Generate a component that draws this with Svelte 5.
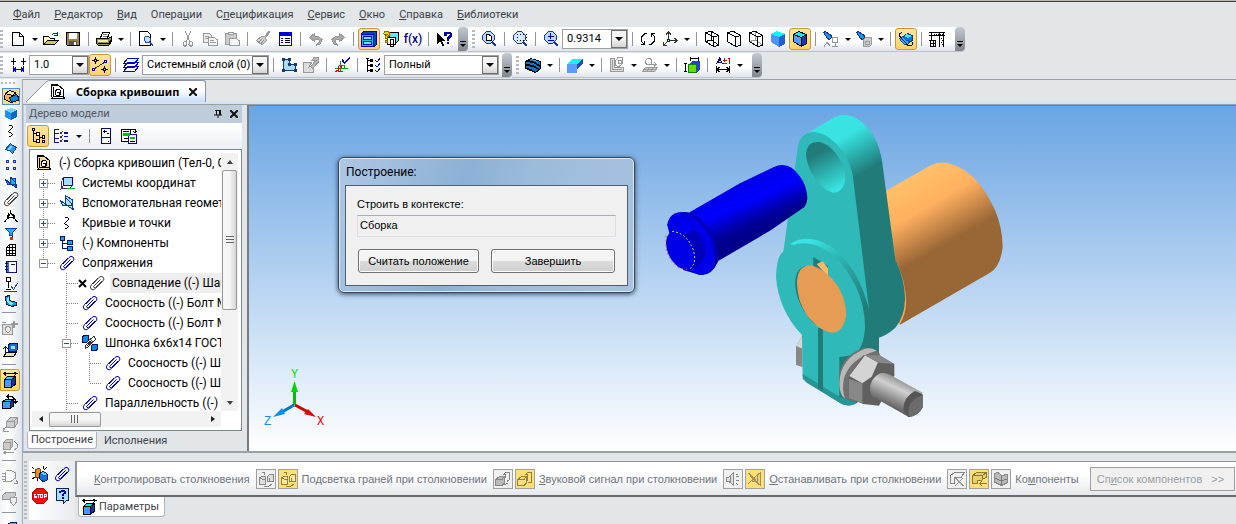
<script lang="ts">
    type Shape = [fill: string, stroke: string, d: string];

    const K = "#000000";
    const B = "#0000c8";
    const G = "#999999";
    const N = "none";

    // every icon is a list of [fill, stroke, path] on a 16x16 grid
    const icons: Record<string, Shape[]> = {
        doc: [["#fff", K, "M2.5 1.5H9.5L13.5 5.5V14.5H2.5Z"], [N, K, "M9.5 1.5V5.5H13.5"]],
        open: [
            ["#ffffb0", K, "M.5 13.5V5.5H5.5L7.5 7.5H11.5V9"],
            ["#c8c864", K, "M.5 13.5L4.5 9.5H15.5L11.5 13.5Z"],
            [N, "#0030d0", "M8.5 4.5Q11 .5 14.5 3.5M14.5 0.5V4.5H11"],
        ],
        save: [
            ["#a08040", K, "M1.5 1.5H14.5V14.5H2.5L1.5 13Z"],
            ["#fff", N, "M4 2H12V8H4Z"],
            ["#555", N, "M4 10H12V14H4Z"],
            ["#fff", N, "M9 11H11V14H9Z"],
        ],
        print: [
            ["#fff", K, "M4.5 7L6.5 1.5H13.5L11.5 7"],
            [N, "#777", "M7 3.5H11M6.5 5.5H10.5"],
            ["#90905a", K, "M.5 7.5H12.5L15.5 5.5V10.5L12.5 14.5H2.5L.5 12.5Z"],
            ["#f0f0a0", N, "M2 9H12V11H2Z"],
            [N, K, "M2 12.5H12.5L15 9"],
        ],
        preview: [
            ["#fff", K, "M1.5 .5H9.5L12.5 3.5V14.5H1.5Z"],
            ["#bfe4ff", "#2244aa", "M7.5 5.5H10.5L12.5 7.5V9.5L10.5 11.5H8L6.5 9.5V7Z"],
            [N, "#2244aa", "M11 11L15 15M12 11L15.5 14.5"],
        ],
        cut: [[N, G, "M5.5 .5L9.5 10M10.5 .5L6.5 10M6.5 10.5H4.5L3.5 12V14L5 15.5L7 13.5ZM9.5 10.5H11.5L12.5 12V14L11 15.5L9 13.5Z"]],
        copy: [
            ["#eee", G, "M1.5 2.5H7.5L9.5 4.5V11.5H1.5Z"],
            ["#f6f6f6", G, "M6.5 6.5H12.5L15.5 9V14.5H6.5Z"],
            [N, G, "M3 5.5H7M3 7.5H6M8 9.5H12M8 11.5H14"],
        ],
        paste: [
            ["#ccc", G, "M1.5 2.5H12.5V13.5H1.5Z"],
            ["#eee", G, "M4.5 3.5V1.5H9.5V3.5Z"],
            ["#f6f6f6", G, "M5.5 7.5H12L15.5 10V14.5H5.5Z"],
        ],
        brush: [["#ccc", G, "M15 1L10 7L12 9L7 14L1.5 9.5L7 5L9 6L14 .5Z"], [N, G, "M4 11L7 8M6 13L9 9"]],
        props: [
            ["#fff", B, "M2.5 1.5H14.5V14.5H2.5Z"],
            [B, N, "M2 1H15V5H2Z"],
            [N, B, "M4 7.5H6M4 9.5H6M4 11.5H6"],
            [N, K, "M8 7.5H13M8 9.5H13M8 11.5H13"],
        ],
        undo: [["#aaa", G, "M1.5 6.5L6.5 2.5V5H10L14 8.5L12 13L8 14.5L11 11V9L9 8H6.5V10.5Z"]],
        redo: [["#aaa", G, "M14.5 6.5L9.5 2.5V5H6L2 8.5L4 13L8 14.5L5 11V9L7 8H9.5V10.5Z"]],
        cabinet: [
            ["#0048a8", B, "M.5 2.5L2.5 .5H15.5V13.5L13.5 15.5H.5Z"],
            ["#00c8d8", B, "M.5 3.5H12.5V15.5H.5Z"],
            ["#60e8f0", B, "M2.5 5.5H10.5V8.5H2.5ZM2.5 10.5H10.5V13.5H2.5Z"],
        ],
        library: [
            ["#60e8f0", K, "M6.5 1.5H15.5V9.5L13.5 11.5H6.5Z"],
            ["#fff", K, "M4.5 6.5H12.5V13.5H4.5ZM7.5 8.5H10.5V15.5H7.5Z"],
            ["#f0e000", "#807000", "M.5 2.5L2 .5H5L6.5 2V4L4.5 6V7.5H2.5V5L4 3.5V3H3L2 4Z"],
            ["#f0e000", "#807000", "M2.5 9.5H4.5V11.5H2.5Z"],
        ],
        pointer: [
            [K, N, "M1 1V13L4 10.5L6.5 15.5L8.5 14.5L6 10H9.5Z"],
            ["#0000b0", N, "M8 1H14L16 2.5V5L13 8V9.5H11V7L13.5 4V3H10.5V5H8ZM11 11H13V13H11Z"],
        ],
        zoomPage: [
            ["#b8d8ff", "#1a3aa0", "M5.5 .5H9.5L13.5 4.5V8.5L9.5 12.5H5.5L1.5 8.5V4.5Z"],
            ["#fff", K, "M5.5 3.5H8L10.5 5.5V9.5H5.5Z"],
            [N, "#1a3aa0", "M11 10L15.5 14.5M10 11L14.5 15.5M11 11L15 15"],
        ],
        zoomArea: [
            ["#d8e8ff", "#1a3aa0", "M5.5 .5H9.5L13.5 4.5V8.5L9.5 12.5H5.5L1.5 8.5V4.5Z"],
            [N, K, "M5 3.5H6M8 3.5H9M11 3.5H12M14 3.5H15M5 6H6M5 9H6M8 9.5H9M11 9.5H12M14.5 6V7M14.5 9V10"],
            [N, "#1a3aa0", "M11 10L15.5 14.5M10 11L14.5 15.5M11 11L15 15"],
        ],
        zoomIn: [
            ["#b8d8ff", "#1a3aa0", "M5.5 .5H9.5L13.5 4.5V8.5L9.5 12.5H5.5L1.5 8.5V4.5Z"],
            [N, "#0000a0", "M7.5 2V8M4.5 5.5H11M4.5 9.5H11"],
            [N, "#1a3aa0", "M11 10L15.5 14.5M10 11L14.5 15.5M11 11L15 15"],
        ],
        rotate: [[N, K, "M7 2.5H5L1.5 6V10L4 13.5M1 13.5H5M4.5 10V14M9 13.5H11L14.5 10V6L12 2.5M15 2.5H11M11.5 2V6"]],
        axes: [
            [N, "#333", "M6.5 10V1M4 3.5L6.5 1L9 3.5M6 9.5H15M12.5 7L15 9.5L12.5 12M6 10L1.5 14.5M1.5 11V14.5H5"],
            ["#fff", "#0000ff", "M5.5 8.5H7.5V10.5H5.5Z"],
        ],
        wire: [[N, K, "M1.5 1.5L7.5 .5L14.5 4.5V14.5L9.5 15.5L1.5 10.5ZM1.5 1.5L9.5 6L14.5 4.5M9.5 6V15.5M7.5 .5V9L14.5 14M7.5 9L1.5 10.5"]],
        hidden: [["#fff", K, "M1.5 1.5L7.5 .5L14.5 4.5V14.5L9.5 15.5L1.5 10.5Z"], [N, K, "M1.5 1.5L9.5 6L14.5 4.5M9.5 6V15.5"]],
        thin: [
            [N, "#999", "M7.5 .5V9L14.5 14M7.5 9L1.5 10.5"],
            [N, K, "M1.5 1.5L7.5 .5L14.5 4.5V14.5L9.5 15.5L1.5 10.5ZM1.5 1.5L9.5 6L14.5 4.5M9.5 6V15.5"],
        ],
        shaded: [
            ["#5090ff", N, "M1 3L9 6V16L1 11Z"],
            ["#00ffff", N, "M1 3L7 0L15 3L9 6Z"],
            ["#2060d0", N, "M9 6L15 3V13L9 16Z"],
        ],
        shadedEdges: [
            ["#5c98ff", K, "M1.5 3.5L9.5 6.5V15.5L1.5 10.5Z"],
            ["#00f0ff", K, "M1.5 3.5L6.5 .5L14.5 3.5L9.5 6.5Z"],
            ["#1838b0", K, "M9.5 6.5L14.5 3.5V12.5L9.5 15.5Z"],
        ],
        torchNet: [
            ["#2090f0", "#103080", "M.5 1.5L2.5 .5L5 2.5L8.5 4.5V6.5L6.5 8.5L4.5 7.5Z"],
            [N, G, "M9.5 6.5H14.5V11.5H9.5ZM12 12V15M9 15.5H15M1 15.5L4 11.5L7 14.5"],
        ],
        torchBox: [
            ["#2090f0", "#103080", "M.5 1.5L2.5 .5L5 2.5L8.5 4.5V6.5L6.5 8.5L4.5 7.5Z"],
            ["#ccc", G, "M7.5 8.5L9.5 6.5H15.5V13.5L13.5 15.5H7.5Z"],
            [N, G, "M9.5 10.5H13.5V13.5H9.5Z"],
        ],
        orbit: [
            ["#0078e0", "#003c90", "M5.5 5.5L9.5 2.5L14.5 4.5V9.5L10.5 11.5L5.5 9.5Z"],
            ["#50e0ff", N, "M6 5L9 3L14 5L10 7Z"],
            ["#30b0ff", "#0050a0", "M1.5 7.5L4.5 5.5L7.5 8.5L10 10V13L6.5 13.5L3 10Z"],
            [N, K, "M4 1.5L1.5 2.5V5L10 14.5L14.5 14V11"],
        ],
        crane: [[N, K, "M0 1.5H16M0 4.5H16M2.5 2V9M10.5 2V15.5M14.5 2V15.5M12 7V8M13 9V10M12 11V12M13 13V14M0 9.5H7M1.5 9.5V15.5M6.5 9.5V15.5M1 15.5H7M4 9V15M1 12.5H7M5 3H6M7 3H8M9 3H10M11 3H12M13 3H14"]],
        step: [[N, K, "M3.5 1V8M1 4.5H6M13.5 1V8M11 4.5H16"], [N, B, "M3.5 9V15M13.5 9V15M4 12.5H13M6 10.5L4 12.5L6 14.5M11 10.5L13 12.5L11 14.5"]],
        snap: [
            [N, K, "M3.5 0V7M0 3.5H7M12.5 9V16M9 12.5H16"],
            ["#ffe3a0", K, "M2.5 2.5H4.5V4.5H2.5ZM11.5 11.5H13.5V13.5H11.5Z"],
            [N, "#333", "M2 12L13 5"],
            ["#fff", B, "M.5 11.5H2.5V13.5H.5ZM12.5 3.5H14.5V5.5H12.5Z"],
        ],
        layers: [["#fff", B, "M.5 14.5L4.5 9.5H15.5L11.5 14.5ZM.5 10.5L4.5 5.5H15.5L11.5 10.5ZM.5 6.5L4.5 1.5H15.5L11.5 6.5Z"]],
        sketch: [
            ["#a8dcf0", "#1a3a70", "M2.5 2.5H8.5V7.5H14.5V13.5H2.5Z"],
            ["#1a3a70", N, "M1 1H4V4H1ZM7 1H10V4H7ZM7 6H10V9H7ZM13 6H16V9H13ZM13 12H16V15H13ZM1 12H4V15H1Z"],
        ],
        sketchOff: [["#ddd", G, "M.5 5.5H8.5L6 10L10.5 9V15.5H.5Z"], ["#bbb", G, "M7.5 9.5L13.5 3L9 3L11 .5H15.5V5L9.5 11.5Z"]],
        basis: [
            [N, "#00a000", "M6.5 14V4M1 11.5H14M6 8.5H10.5V12"],
            [N, "#e00000", "M6 11L1.5 15M5.5 8.5L8 10.5M4.5 9V14H9"],
            [N, "#0000c0", "M8 2L10.5 5.5L15.5 .5M8 3L10.5 6.5L15.5 1.5"],
        ],
        variants: [
            [N, K, "M2.5 1V15M2 3.5H8M2 8.5H8M2 13.5H8M1 1.5H4"],
            [K, N, "M5 2H8V5H5ZM5 7H8V10H5ZM5 12H8V15H5Z"],
            [N, B, "M10 3L12 5L15 1.5M10 8L12 10L15 6.5M10 13L12 15L15 11.5"],
        ],
        hatch: [
            ["#0878c8", K, "M.5 4.5L5.5 1.5L15.5 4.5V11.5L10.5 15.5L.5 11.5Z"],
            [K, N, "M1 3L8 4L15 8V10L8 6L1 5ZM1 7L8 8L15 12V13L8 10L1 9ZM1 11L6 12L11 15H8L1 12Z"],
            ["#30b0f8", N, "M5 2L10 3L12 5L6 3Z"],
        ],
        plane: [
            ["#5c9cff", N, "M0 7H10V16H0Z"],
            ["#00ffff", N, "M0 7L6 2H16L10 7Z"],
            ["#2848b0", N, "M10 7L16 2V6L11 11L10 14Z"],
        ],
        section: [["#ddd", G, "M1.5 1.5H5.5V10.5H14.5V14.5H1.5Z"], [N, G, "M6.5 8.5V3.5L9 .5H13.5V6.5L10 9.5ZM9 3H12V6H9ZM3.5 3V12.5H13"]],
        mould: [[N, G, "M3.5 3.5L5.5 1.5H8.5L9.5 3.5V6.5L8 7.5H5L3.5 6ZM8 7.5H14M12 5L14 7.5L12 9.5"], ["#ccc", G, "M.5 14.5L3.5 10.5H15.5L12.5 14.5Z"], [N, G, "M2 12.5H14M7 11L5 14M11 11L9 14"]],
        measure: [
            ["#2838ff", N, "M5 7L8 4H16V12L13 16Z"],
            ["#60e000", "#108000", "M4.5 7.5H12.5V15.5H4.5Z"],
            [N, K, "M1.5 6V15M0 6.5H3M0 14.5H3M6.5 0V4M14.5 0V4M7 1.5H14"],
        ],
        dims: [
            [N, "#000080", "M1.5 7L4.5 1L7.5 7M2.5 6L5.5 1M3 5.5H7"],
            [N, "#e00000", "M9.5 1V5M8 3.5H12M8 6.5H12M14 .5V7M14.5 .5V7M13 1.5H15"],
            [N, K, "M1.5 9V16M14.5 9V16M2 12.5H14M4.5 10L2 12.5L4.5 15M11.5 10L14 12.5L11.5 15"],
        ],
        assembly: [
            ["#f0b838", K, "M1.5 7.5V10.5L8.5 13.5V9.5L13.5 5.5L9 2.5H5.5L2.5 5Z"],
            ["#ffe890", K, "M2.5 4.5L6.5 1.5L12.5 3.5L9.5 6.5Z"],
            ["#0088e0", K, "M6.5 8.5L13.5 5.5L15 7.5V11.5L8.5 13.5Z"],
        ],
        box: [["#2090f0", N, "M2 4L8 7V14L2 11Z"], ["#70d8ff", N, "M2 4L8 2L14 4L8 7Z"], ["#0868c8", N, "M8 7L14 4V11L8 14Z"]],
        curve: [[N, K, "M6 2.5H9M9.5 3V5M8.5 5V6M7.5 6V7M6.5 7V8M5.5 8V9M6 9.5H8M8.5 10V11M9.5 11V12M8.5 12V13M6 13.5H8"]],
        surface: [["#2898f0", "#104898", "M2.5 9.5L7.5 3.5L9 5L13.5 7.5L9.5 13.5L7 11Z"], ["#80d8ff", N, "M4 9L8 5L9 7L6 10Z"]],
        array: [["#8cc8ff", "#1838c0", "M3.5 3.5H5.5V5.5H3.5ZM10.5 3.5H12.5V5.5H10.5ZM3.5 10.5H5.5V12.5H3.5ZM10.5 10.5H12.5V12.5H10.5Z"]],
        aux: [["#a8e0ff", "#0838a0", "M6.5 .5V9L1.5 5.5L3.5 10.5H8L13.5 14V5Z"], [N, "#0838a0", "M1.5 5.5L8 10.5H14M7 3L12 8L15 15"]],
        auxBold: [["#10b0f0", "#0838a0", "M7.5 3.5V9L2.5 5.5L4.5 10.5H8L12.5 13V5Z"], [N, "#0838a0", "M2.5 5.5L8 10.5H14M8 4L12 8L14 14"]],
        clip: [[N, B, "M4.500 11.500L11.500 4.500M4 9L10 2.500Q12 .5 14 2Q16 4 14 6L6.500 13.500Q4 16 2 14Q.5 12 2.500 9.500L9 3M4.500 11.500Q4.500 13 6.500 12.500L13 6"]],
        clipBlack: [[N, "#444", "M4.500 11.500L11.500 4.500M4 9L10 2.500Q12 .5 14 2Q16 4 14 6L6.500 13.500Q4 16 2 14Q.5 12 2.500 9.500L9 3M4.500 11.500Q4.500 13 6.500 12.500L13 6"]],
        compass: [[N, K, "M7.5 2V5M7.5 5L2 14M8 5L14 14M6 5.5L4 9M10 6L12 9M4 11L7 9H9L12 11M1 13.5H3M13 13.5H15"]],
        filter: [["#20b0f0", "#0848a0", "M2.5 3.5H13.5L9.5 7.5V11L6.5 10V7.5Z"], ["#e03010", N, "M7 12H10V15H7Z"]],
        sheet: [["#fff", K, "M3.5 5.5L6.5 2.5H12.5V13.5H3.5Z"], [N, K, "M4 5.5H12M4 8.5H12M4 11.5H12M6.5 3V13M9.5 3V13"]],
        book: [["#fff", "#101080", "M3.5 2.5H13.5V13.5H3.5Z"], ["#3070d0", N, "M4 3H6V13H4Z"], [N, "#101080", "M8 5.5H12M2 4.5H5M2 7.5H5M2 10.5H5"]],
        branch: [[N, K, "M3.5 1.5H7.5V5.5H3.5ZM5.5 6V12M3 13.5H8"], [N, "#1040c0", "M8 10L10.5 13.5L14.5 7M1 15.5H14"]],
        elbow: [["#10a8c8", "#001870", "M2.5 3.5L6.5 2.5V7.5L13.5 9.5V12L9 13.5L3.5 11.5Z"], ["#80f0ff", N, "M4 5L6 4V8L10 10L8 12L4 9Z"]],
        cam: [["#ddd", G, "M.5 4.5H10.5V14.5H.5Z"], ["#eee", G, "M3.5 8L5 6.5H7L8.5 8V10.5L7 12H5L3.5 10.5Z"], [N, G, "M12.5 1V8M9 4.5H16M11.5 1V8M9 3.5H16M0 2.5H4"]],
        place: [
            ["#e8e890", K, "M1.5 14.5L4.5 10.5H14.5L11.5 14.5Z"],
            ["#1070d0", "#001060", "M6.5 2.5L8.5 1.5H15.5V7.5L14 9.5H6.5Z"],
            [N, B, "M3.5 11V5L1 6.5M3.5 5L6 7"],
            ["#a0e0ff", N, "M9 4H13V7H9Z"],
        ],
        move: [
            [N, K, "M1 1.5H15M4 0L1.5 1.5L4 3.5M12 0L15 1.5L12 3.5"],
            ["#4898ff", K, "M2.5 7.5H9.5V15.5H2.5Z"],
            ["#00e8f0", K, "M2.5 7.5L5.5 4.5H13.5L9.5 7.5Z"],
            ["#0838a0", K, "M9.5 7.5L13.5 4.5V12L9.5 15.5Z"],
        ],
        turn: [
            ["#4898ff", K, "M.5 7.5H8.5V14.5H.5Z"],
            ["#00d0f0", K, "M.5 7.5L3.5 5.5H11.5L8.5 7.5Z"],
            ["#0838a0", K, "M8.5 7.5L11.5 5.5V12L8.5 14.5Z"],
            [N, K, "M5 2.5H10L13.5 6V9M7 .5L5 2.5L7 4.5M11.5 7L13.5 9.5L15.5 7"],
        ],
        cubeOff: [["#ccc", G, "M4.5 5.5L8.5 1.5H15.5V7.5L12 11.5H4.5Z"], [N, G, "M5 5.5H12V11M12 5L15 2M4 11L1 15M1 12V15H7"]],
        swap: [["#ccc", G, "M1.5 4.5L4.5 1.5H10.5V8.5L8 11.5H1.5Z"], [N, G, "M2 4.5H8V11M12 3L15 6V10L12 12M2 14.5H12M4 13L2 14.5L4 16"]],
        magnet: [[N, G, "M4 2.5H9L13.5 5V10L9 13.5H1M3 5.5H0M3 8.5H0M3 11.5H0M3.5 4V13M14 12L16 15H12"]],
        shield: [["#ccc", G, "M.5 5.5L4 2.5H13.5V5.5L10 9H.5Z"], ["#eee", G, "M8.5 7.5H14.5V12L11.5 15.5L8.5 12Z"]],
        assemblyFile: [
            ["#f6d898", K, "M1.5 1.5H8.5L13.5 5.5V12.5L14.5 14.5H3.5L1.5 12.5Z"],
            ["#fff", K, "M5.5 6.5L7.5 5.5H9.5L10.5 7V10L9 11.5H6.5L5.5 10Z"],
            [N, K, "M3.5 3V12.5H13M7 8H9V9.5M1 14.5H15M1 .5H8"],
        ],
        tabFile: [
            ["#fff", K, "M1.5 1.5H8.5L13.5 5.5V12.5L14.5 14.5H3.5L1.5 12.5Z"],
            [N, K, "M5.5 6.5L7.5 5.5H9.5L10.5 7V10L9 11.5H6.5L5.5 10ZM3.5 3V12.5H13M7 8H9V9.5M1 14.5H15M1 .5H8"],
        ],
        tree: [
            [N, K, "M3.5 2V13.5M4 5.5H8M4 13.5H8M9.5 7V12M9 9.5H12"],
            ["#fff", K, "M2.5 .5H4.5V2.5H2.5ZM6.5 4.5H9.5V7.5H6.5ZM12.5 7.5H14.5V10.5H12.5ZM6.5 11.5H9.5V14.5H6.5ZM12.5 12.5H14.5V14.5H12.5Z"],
        ],
        checks: [[N, "#1010a0", "M1.5 1V15M2 1.5H6M2 5.5H6M2 10.5H6M2 14.5H6M11 4.5H15M11 8.5H15M11 12.5H15M11 5.5H15M11 13.5H15"], [N, "#333", "M7 4L8 5.5L10 3M7 8L8 9.5L10 7M7 12L8 13.5L10 11"]],
        panel: [["#fff", "#000090", "M3.5 .5H12.5V15.5H3.5Z"], [N, "#000090", "M4 9.5H12"], [N, K, "M6.5 2V5M5 3.5H9M9 5.5H11M10 13H11"]],
        panels: [["#fff", K, "M.5 1.5H9.5V13.5H.5Z"], ["#fff", B, "M7.5 6.5H15.5V15.5H7.5Z"], ["#00c000", N, "M2 5H9V8H2ZM9 9H14V11H9Z"], [N, K, "M2 3.5H8M10 1.5H14V4M12 3L14 5L16 3M3 10.5H7M9 13.5H14"]],
        coords: [["#a8dcff", B, "M4.5 2.5H13.5V10.5H4.5Z"], [N, "#303090", "M2.5 5.5L4.5 2.5M2.5 5.5V13.5H11L13.5 10.5M4.5 10.5L2.5 13.5"], [N, "#00b000", "M8 13.5H16"], [N, "#e00000", "M3 13L.5 15.5"]],
        parts: [[N, "#001878", "M3.5 4V13.5H10M4 8.5H9"], ["#20a0e0", "#001878", "M1.5 1.5H5.5V5.5H1.5ZM8.5 5.5H13.5V9.5H8.5ZM8.5 11.5H13.5V15.500H8.5Z"]],
        mates: [["#1088e0", "#001060", "M.5 1.5L2.5 .5H6.5V5.500L5 7H.5ZM9.5 10.5L11 9.5H15.5V14L14 15.5H9.5Z"], [N, "#333", "M7 5L12 1.5L14 4L6 12L3.5 13L3 11L10 5M5 11L11 6"]],
        collide: [
            ["#f09018", "#804000", "M3.5 3.5L7 2.5L8.5 3.5V11.5H3.5Z"],
            ["#1870e0", "#001870", "M7.5 7.5L11.5 5.5L15.5 8.5V13.5L13 15H10.5L7.5 12.500Z"],
            ["#50d8ff", N, "M8 7L11 6L15 8L12 9Z"],
            [N, K, "M0 1L2 3M0 6.5H3M0 13L3 11M11 0V3M15 1L12 4M5 15V12"],
        ],
        collideOff: [["#ddd", "#888", "M1.5 6.5L4 5.5H7.5V13.5H1.5ZM9.5 5.5L11.5 3.5H15.5V10.5H9.5Z"], [N, "#888", "M2 6.5L4 8H7M3.5 1.5H6.5V4M6 15H11L14 13M11 7V10"]],
        collideOn: [["#f8e8a0", "#98803c", "M1.5 6.5L4 5.5H7.5V13.5H1.5ZM9.5 5.5L11.5 3.5H15.5V10.5H9.5Z"], [N, "#98803c", "M2 6.5L4 8H7M3.5 1.5H6.5V4M6 15H11L14 13M11 7V10"]],
        faces: [["#bbb", "#888", "M.5 8.5L4.5 5.5H9.5V12L7 14.5H.5Z"], [N, "#888", "M1 8.500H7L9 6M8.5 4L10.5 1.5H14.5V8.5L12 10.5M10.5 3V7M9 14L13 12"]],
        facesOn: [["#f8e080", "#98803c", "M.5 8.5L4.5 5.5H9.5V12L7 14.5H.5Z"], [N, "#98803c", "M1 8.500H7L9 6M8.5 4L10.5 1.5H14.5V11.5H11M10.5 3V10"]],
        speaker: [["#ddd", "#888", "M1.5 6.5H3.5L8.5 1.5V14.5L3.5 10H1.5Z"], [N, "#888", "M5.5 5V11M11 3H13M11 6L14 5M11 9L14 10M11 12L13 14"]],
        mute: [["#e8d088", "#a89050", "M5.5 6.5H7.5L13.5 1.5V14.5L7.5 10H5.5Z"], [N, "#a89050", "M1 2L11 13M2 2L12 13M11 3L1 13M10.5 5V11"]],
        stopOff: [["#eee", "#888", "M1.5 4.5L5.5 1.5H15.5L12 6.5H5V12H1.5Z"], [N, "#999", "M6 7L14 15M14 7L6 15M7 7L15 15"]],
        stopOn: [["#e8d070", "#907830", "M1.5 4.5L5.5 1.5H15.5V6L10 9.5H6V12H1.5Z"], [N, "#907830", "M2 4.5H11V9M11 5L15 2M9 12.5H16M11 10L9 12.5L11 15"]],
        comps: [["#bbb", "#888", "M1.5 2.5L5 1.5L8.5 4.5L14.5 3.5V11.5L8.5 14.5L1.5 11Z"], [N, "#777", "M8.5 5V14M2 7L8 10L14 8"]],
        stop: [["#f01010", "#c00000", "M4.5 .5H11.5L15.5 4.5V11.5L11.5 15.5H4.5L.5 11.5V4.5Z"], [N, "#fff", "M4 6.5H2.5V8H4V9.5H2M5 6.5H8M6.5 7V10M8.5 6.5H10.5V9.5H8.5ZM12.5 10V6.5H14V8.5H13"]],
        help: [["#a8e0ff", "#102050", "M2.5 .5H14.5V12.5H12.5L9.5 15.5V12.5H2.5Z"], ["#0000a0", N, "M5 3H7V2H11V3H12V6H10V8H8V6L10 5V4H7V5H5ZM8 9H10V11H8Z"]],
        edgePart: [["#20c8d8", "#001060", "M4.5 5.5L8.5 2.5H14.5V15H4.5Z"]],
    };

    type Item = { icon?: string; label?: string; on?: boolean; arrow?: boolean; sep?: boolean; fx?: boolean; options?: string[]; size?: string };
    const sep: Item = { sep: true };

    const topLeft: Item[] = [
        { icon: "doc", label: "Создать", arrow: true },
        { icon: "open", label: "Открыть" },
        { icon: "save", label: "Сохранить" },
        sep,
        { icon: "print", label: "Печать", arrow: true },
        sep,
        { icon: "preview", label: "Просмотр", arrow: true },
        sep,
        { icon: "cut", label: "Вырезать" },
        { icon: "copy", label: "Копировать" },
        { icon: "paste", label: "Вставить" },
        sep,
        { icon: "brush", label: "Копировать свойства" },
        { icon: "props", label: "Свойства" },
        sep,
        { icon: "undo", label: "Отменить" },
        { icon: "redo", label: "Повторить" },
        sep,
        { icon: "cabinet", label: "Менеджер библиотек", on: true },
        { icon: "library", label: "Менеджер документа" },
        { fx: true, label: "Переменные" },
        sep,
        { icon: "pointer", label: "Справка" },
    ];

    const topRight: Item[] = [
        { icon: "zoomPage", label: "Показать все" },
        sep,
        { icon: "zoomArea", label: "Увеличить рамкой" },
        sep,
        { icon: "zoomIn", label: "Масштаб" },
        { options: ["0.9314"], label: "Текущий масштаб", size: "zoom" },
        sep,
        { icon: "rotate", label: "Повернуть" },
        { icon: "axes", label: "Ориентация", arrow: true },
        sep,
        { icon: "wire", label: "Каркас" },
        { icon: "hidden", label: "Без невидимых линий" },
        { icon: "thin", label: "Невидимые линии тонкие" },
        { icon: "shaded", label: "Полутоновое" },
        { icon: "shadedEdges", label: "Полутоновое с каркасом", on: true },
        sep,
        { icon: "torchNet", label: "Скрыть", arrow: true },
        { icon: "torchBox", label: "Показать", arrow: true },
        sep,
        { icon: "orbit", label: "Упрощенное отображение", on: true },
        sep,
        { icon: "crane", label: "Перестроить" },
    ];

    const lowLeft: Item[] = [
        { icon: "step", label: "Шаг курсора" },
        { options: ["1.0"], label: "Шаг", size: "step" },
        { icon: "snap", label: "Привязки", on: true },
        sep,
        { icon: "layers", label: "Слои" },
        { options: ["Системный слой (0)"], label: "Слой", size: "layer" },
        sep,
        { icon: "sketch", label: "Эскиз" },
        { icon: "sketchOff", label: "Редактировать эскиз" },
        sep,
        { icon: "basis", label: "Система координат" },
        sep,
        { icon: "variants", label: "Типы загрузки" },
        { options: ["Полный"], label: "Тип загрузки", size: "load" },
    ];

    const lowRight: Item[] = [
        { icon: "hatch", label: "Разнесение", arrow: true },
        sep,
        { icon: "plane", label: "Плоскость", arrow: true },
        sep,
        { icon: "section", label: "Сечение", arrow: true },
        { icon: "mould", label: "Проекция", arrow: true },
        sep,
        { icon: "measure", label: "Габарит" },
        sep,
        { icon: "dims", label: "Размеры", arrow: true },
    ];

    const menu = [
        ["", "Ф", "айл"],
        ["", "Р", "едактор"],
        ["", "В", "ид"],
        ["Опера", "ц", "ии"],
        ["С", "п", "ецификация"],
        ["", "С", "ервис"],
        ["", "О", "кно"],
        ["", "С", "правка"],
        ["", "Б", "иблиотеки"],
    ];

    const modes = ["assembly", "box", "curve", "surface", "array", "auxBold", "clipBlack", "compass", "filter", "sheet", "book", "branch", "elbow"];
    const tools = [["cam", "place"], ["move", "turn", "cubeOff", "swap"], ["magnet", "shield"], ["edgePart"]];

    type Node = { text: string; icon: string; level: number; exp?: string; sel?: boolean };
    const nodes: Node[] = [
        { text: "(-) Сборка кривошип (Тел-0, Сб", icon: "assemblyFile", level: 0 },
        { text: "Системы координат", icon: "coords", level: 1, exp: "+" },
        { text: "Вспомогательная геометрия", icon: "aux", level: 1, exp: "+" },
        { text: "Кривые и точки", icon: "curve", level: 1, exp: "+" },
        { text: "(-) Компоненты", icon: "parts", level: 1, exp: "+" },
        { text: "Сопряжения", icon: "clip", level: 1, exp: "-" },
        { text: "Совпадение ((-) Шайба", icon: "clipBlack", level: 2, sel: true },
        { text: "Соосность ((-) Болт М6", icon: "clip", level: 2 },
        { text: "Соосность ((-) Болт М6", icon: "clip", level: 2 },
        { text: "Шпонка 6х6х14 ГОСТ 23", icon: "mates", level: 2, exp: "-" },
        { text: "Соосность ((-) Шпонка", icon: "clip", level: 3 },
        { text: "Соосность ((-) Шпонка", icon: "clip", level: 3 },
        { text: "Параллельность ((-) Г", icon: "clip", level: 2 },
    ];

    const params = [
        { label: ["", "К", "онтролировать столкновения"], buttons: ["collideOff", "collideOn"] },
        { label: ["По", "д", "светка граней при столкновении"], buttons: ["faces", "facesOn"] },
        { label: ["", "З", "вуковой сигнал при столкновении"], buttons: ["speaker", "mute"] },
        { label: ["", "О", "станавливать при столкновении"], buttons: ["stopOff", "stopOn", "comps"] },
        { label: ["Ко", "м", "поненты"], buttons: [] },
    ];
</script>

{#snippet icon(name: string)}
    <svg class="icon" class:smooth={name.startsWith("clip")} viewBox="0 0 16 16" aria-hidden="true">
        {#each icons[name] as [fill, stroke, d]}
            <path {fill} {stroke} {d} />
        {/each}
    </svg>
{/snippet}

{#snippet hot(parts: string[])}{parts[0]}<u>{parts[1]}</u>{parts[2]}{/snippet}

{#snippet bar(items: Item[])}
    <div class="bar" role="toolbar">
        <i class="grip"></i>
        {#each items as item}
            {#if item.sep}
                <i class="sep"></i>
            {:else if item.options}
                <span class="combo {item.size}">
                    <select aria-label={item.label}>
                        {#each item.options as option}<option>{option}</option>{/each}
                    </select>
                    <i class="drop"></i>
                </span>
            {:else}
                <button class="tool" class:on={item.on} aria-label={item.label}>
                    {#if item.fx}<span class="fx">f(x)</span>{:else}{@render icon(item.icon ?? "")}{/if}
                </button>
                {#if item.arrow}<button class="arrow" aria-label="{item.label}: список"></button>{/if}
            {/if}
        {/each}
        <i class="cap"></i>
    </div>
{/snippet}

<div class="app">
    <nav class="menu">
        {#each menu as item}
            <button>{@render hot(item)}</button>
        {/each}
    </nav>
    <div class="bars">{@render bar(topLeft)}{@render bar(topRight)}</div>
    <div class="bars">{@render bar(lowLeft)}{@render bar(lowRight)}</div>

    <div class="work">
        <aside class="strip">
            <i class="strip-grip"></i>
            {#each modes as mode, i}
                <button class="mode" class:current={i === 0} aria-label={mode}>{@render icon(mode)}</button>
            {/each}
            {#each tools as group}
                <hr />
                {#each group as tool}
                    <button class="side-tool" class:on={tool === "move"} aria-label={tool}>{@render icon(tool)}</button>
                {/each}
            {/each}
        </aside>

        <main>
            <div class="tabs">
                <svg class="slope" viewBox="0 0 24 22" aria-hidden="true">
                    <path d="M0 22L20 2Q22 .5 24 .5V22Z" fill="#fff" />
                    <path d="M0 22L20 2Q22 .5 24 .5" fill="none" stroke="#8a94a4" />
                </svg>
                <div class="tab">
                    {@render icon("tabFile")}
                    <b>Сборка кривошип</b>
                    <button class="close" aria-label="Закрыть">
                        <svg viewBox="0 0 8 8"><path d="M0 0L8 8M8 0L0 8" stroke="#111" stroke-width="2" /></svg>
                    </button>
                </div>
            </div>

            <div class="middle">
                <section class="panel">
                    <header>
                        <span>Дерево модели</span>
                        <button class="close" aria-label="Закрепить">
                            <svg viewBox="0 0 8 8"><path d="M1 .5H7M2.5 0V5M5.5 0V5M6.5 0V5M0 5H8M4 5V8" stroke="#111" /></svg>
                        </button>
                        <button class="close" aria-label="Закрыть панель">
                            <svg viewBox="0 0 8 8"><path d="M0 0L8 8M8 0L0 8" stroke="#111" stroke-width="2" /></svg>
                        </button>
                    </header>
                    <div class="panel-bar">
                        <button class="tool on" aria-label="Структура">{@render icon("tree")}</button>
                        <button class="tool" aria-label="Состав">{@render icon("checks")}</button>
                        <button class="arrow" aria-label="Состав: список"></button>
                        <i class="sep"></i>
                        <button class="tool" aria-label="Отношения">{@render icon("panel")}</button>
                        <button class="tool" aria-label="Дополнительное окно">{@render icon("panels")}</button>
                    </div>

                    <div class="tree-box">
                        <ul class="tree">
                            {#each nodes as node, i}
                                <li class="level{node.level}">
                                    {#if node.level > 1}<i class="rail"></i>{/if}
                                    {#if node.level > 2}<i class="rail inner"></i>{/if}
                                    {#if node.level > 0}
                                        <i class="branch" class:half={node.text === "Сопряжения" || i === 11}>
                                            {#if node.exp}<button class="exp" class:plus={node.exp === "+"} aria-label={node.text}></button>{/if}
                                        </i>
                                    {/if}
                                    {#if node.sel}
                                        <svg class="cross" viewBox="0 0 9 9"><path d="M1 1L8 8M8 1L1 8" stroke="#000" stroke-width="2" /></svg>
                                    {/if}
                                    {@render icon(node.icon)}
                                    <span class:sel={node.sel}>{node.text}</span>
                                </li>
                            {/each}
                        </ul>
                        <div class="vscroll">
                            <i class="tri up"></i>
                            <i class="thumb"></i>
                            <i class="tri down"></i>
                        </div>
                        <div class="hscroll">
                            <i class="tri left"></i>
                            <i class="thumb"></i>
                            <i class="tri right"></i>
                        </div>
                    </div>

                    <div class="panel-tabs">
                        <button class="chosen">Построение</button>
                        <button>Исполнения</button>
                    </div>
                </section>

                <section class="view">
                    <svg class="model" viewBox="0 0 1110 990" aria-label="Кривошип">
                        <defs>
                            <linearGradient id="orange" gradientUnits="userSpaceOnUse" x1="840" y1="197" x2="953" y2="396">
                                <stop offset="0" stop-color="#ffc068" />
                                <stop offset=".45" stop-color="#ffb060" />
                                <stop offset="1" stop-color="#996636" />
                            </linearGradient>
                            <linearGradient id="teal" gradientUnits="userSpaceOnUse" x1="560" y1="60" x2="650" y2="215">
                                <stop offset="0" stop-color="#38e4e2" />
                                <stop offset=".3" stop-color="#38e4e2" />
                                <stop offset="1" stop-color="#207b79" />
                            </linearGradient>
                            <linearGradient id="hole" gradientUnits="userSpaceOnUse" x1="500" y1="160" x2="560" y2="270">
                                <stop offset="0" stop-color="#207b79" />
                                <stop offset="1" stop-color="#38e4e2" />
                            </linearGradient>
                            <linearGradient id="rim" gradientUnits="userSpaceOnUse" x1="480" y1="420" x2="655" y2="620">
                                <stop offset="0" stop-color="#38e4e2" />
                                <stop offset=".5" stop-color="#2aa5a4" />
                                <stop offset="1" stop-color="#207b79" />
                            </linearGradient>
                            <linearGradient id="pin" gradientUnits="userSpaceOnUse" x1="260" y1="255" x2="320" y2="390">
                                <stop offset="0" stop-color="#0000e8" />
                                <stop offset=".4" stop-color="#0000ff" />
                                <stop offset=".85" stop-color="#000098" />
                                <stop offset="1" stop-color="#00008c" />
                            </linearGradient>
                            <linearGradient id="steel" gradientUnits="userSpaceOnUse" x1="745" y1="830" x2="705" y2="915">
                                <stop offset="0" stop-color="#888" />
                                <stop offset=".35" stop-color="#d0d0d0" />
                                <stop offset="1" stop-color="#5c5c5c" />
                            </linearGradient>
                        </defs>
                        <!-- shaft -->
                        <path d="M700 277L840 197Q872 180 910 194Q985 220 1035 330Q1058 385 1058 440Q1052 500 1020 518L750 674L690 560Z" fill="url(#orange)" />
                        <path d="M735 480Q768 540 768 605Q768 645 748 674L700 600Z" fill="#ffab5a" />
                        <!-- bolt head -->
                        <path d="M456 708L438 738V795L458 801Z" fill="#888" />
                        <path d="M456 708L438 738L458 746Z" fill="#d4d4d4" />
                        <!-- lever -->
                        <path d="M465 104L553 52Q582 38 615 52Q685 95 697 190L736 480Q766 540 765 600Q764 650 736 683Q712 705 687 713V790L622 908Q600 922 575 912L480 850L440 600Z" fill="url(#teal)" />
                        <path d="M443 145Q450 95 495 96Q555 105 598 190Q608 215 610 240L657 628L400 456Z" fill="#2fb9b8" />
                        <path d="M420 432Q470 398 540 438Q620 490 657 628L640 660L540 480Z" fill="url(#rim)" />
                        <path d="M378 530Q380 470 398 456Q430 424 478 431Q560 445 618 560Q646 620 645 685Q640 750 610 765L568 771V890L458 838L456 705Q385 630 378 530Z" fill="#2fb9b8" />
                        <path d="M458 822L568 890L622 908Q600 922 575 912L470 848Q458 838 458 822Z" fill="#259695" />
                        <path d="M504 680H519V875L504 865Z" fill="#207b79" />
                        <path d="M468 165Q470 122 510 126Q555 140 580 200Q588 225 585 245Q575 280 548 278Q515 270 485 220Q470 190 468 165Z" fill="url(#hole)" />
                        <!-- keyway and shaft face -->
                        <path d="M490 500V471L534 498V530Z" fill="#207b79" />
                        <path d="M500 492L518 484L534 505V530Z" fill="#ffb868" />
                        <path d="M436 560Q432 510 465 498L480 560L500 680Q442 620 436 560Z" fill="#207b79" />
                        <path d="M480 665L550 700L505 682Z" fill="#38e4e2" />
                        <path d="M441 550Q441 495 485 496Q530 510 565 560Q590 605 588 645Q582 695 548 698Q510 695 470 645Q441 600 441 550Z" fill="#e69c54" />
                        <!-- handle -->
                        <path d="M120 336L270 250L370 202Q400 188 425 203Q470 240 472 295Q470 315 462 322L360 392L203 484L130 480Z" fill="url(#pin)" />
                        <path d="M52 375Q60 335 105 336L125 338Q200 385 204 470V485Q185 528 150 525L100 510Z" fill="#0000b4" />
                        <path d="M52 375Q58 337 95 337Q150 350 182 415Q198 460 190 500Q175 525 150 525Q110 515 70 450Z" fill="#0000e8" />
                        <path d="M62 393L95 377Q130 375 155 415Q170 440 164 472L130 510Z" fill="#0000bc" />
                        <path d="M62 393L95 377Q115 375 130 390L105 400Z" fill="#0000ff" />
                        <path d="M48 425Q52 392 78 395Q115 405 132 450Q142 495 118 508Q90 515 65 480Q48 455 48 425Z" fill="#0000e8" />
                        <path d="M66 394Q110 398 130 450Q142 490 118 508" fill="none" stroke="#b8e838" stroke-width="3" stroke-dasharray="6 6" />
                        <path d="M48 408V445Q55 480 85 503L118 509" fill="none" stroke="#e04020" stroke-width="3" stroke-dasharray="4 9" />
                        <!-- washer, nut, thread -->
                        <path d="M568 820Q580 765 640 744Q670 740 690 762L660 880L615 905L580 893Q564 865 568 820Z" fill="#707070" />
                        <path d="M568 850Q570 775 645 746Q665 742 680 752Q600 775 582 835Q575 870 585 896Q568 885 568 850Z" fill="#b8b8b8" />
                        <path d="M594 835L640 766L688 768L733 792V826L687 917L640 912L597 895Z" fill="#606060" />
                        <path d="M598 828L645 766L684 787L665 830L637 850Z" fill="#d4d4d4" />
                        <path d="M596 836L637 850V910L597 894Z" fill="#888" />
                        <path d="M645 766L690 766L733 792L684 788Z" fill="#888" />
                        <path d="M660 870Q660 835 690 820Q705 816 720 824L818 878L775 950L665 888Z" fill="url(#steel)" />
                        <path d="M760 930Q760 890 795 873L818 883V922Q805 950 775 952Z" fill="#555" />
                        <path d="M775 940Q775 905 800 893L818 886V922Q805 950 775 950Z" fill="#6c6c6c" />
                    </svg>

                    <svg class="triad" viewBox="0 0 90 75" aria-hidden="true">
                        <path d="M44.500 45V26" stroke="#00c000" stroke-width="3" />
                        <path d="M44.500 21L48 32H41Z" fill="#00d800" />
                        <path d="M45 45L58 52" stroke="#d00000" stroke-width="3" />
                        <path d="M66 57L54 54L58 49Z" fill="#e80000" />
                        <path d="M44 45L32 52" stroke="#0078d0" stroke-width="3" />
                        <path d="M23 57L32 48L35 54Z" fill="#1090f0" />
                        <text x="41" y="18" fill="#00e800">Y</text>
                        <text x="14" y="65" fill="#1090f0">Z</text>
                        <text x="67" y="65" fill="#e80000">X</text>
                    </svg>

                    <div class="dialog" role="dialog" aria-label="Построение">
                        <h2>Построение:</h2>
                        <div class="dialog-body">
                            <label for="context">Строить в контексте:</label>
                            <input id="context" value="Сборка" readonly />
                            <div class="dialog-buttons">
                                <button>Считать положение</button>
                                <button>Завершить</button>
                            </div>
                        </div>
                    </div>
                </section>
            </div>

            <footer>
                <i class="side-grip"></i>
                <div class="commands">
                    <button aria-label="Столкновения">{@render icon("collide")}</button>
                    <button aria-label="Сопряжения">{@render icon("clip")}</button>
                    <button aria-label="Прервать команду">{@render icon("stop")}</button>
                    <button aria-label="Справка">{@render icon("help")}</button>
                </div>
                <div class="props">
                    <div class="params">
                        {#each params as group}
                            <span class="caption">{@render hot(group.label)}</span>
                            {#if group.buttons.length}
                                <span class="pair">
                                    {#each group.buttons as name, i}
                                        <button class="param" class:lit={i === 1} aria-label="{group.label.join('')} {i + 1}">{@render icon(name)}</button>
                                    {/each}
                                </span>
                            {/if}
                        {/each}
                        <button class="list" disabled>Сп<u>и</u>сок компонентов<span>&gt;&gt;</span></button>
                    </div>
                    <button class="props-tab">{@render icon("move")}Параметры</button>
                </div>
            </footer>
        </main>
    </div>
</div>

<style>
    :global(body) {
        background: #e2e6e9;
    }

    .app {
        height: 100vh;
        display: flex;
        flex-direction: column;
        overflow: hidden;
        box-sizing: border-box;
        border-top: 1px solid #b8bcb8;
        color: #000;
        font: 11px/16px Roboto, sans-serif;
    }

    .app * {
        box-sizing: border-box;
    }

    button {
        border: 0;
        padding: 0;
        background: none;
        color: inherit;
        font: inherit;
        display: flex;
        align-items: center;
        justify-content: center;
        white-space: nowrap;
    }

    .icon {
        width: 16px;
        height: 16px;
        flex: none;
        display: block;
        shape-rendering: crispEdges;
    }

    .smooth {
        shape-rendering: auto;
    }

    .menu {
        flex: none;
        height: 26px;
        display: flex;
        align-items: center;
        gap: 14px;
        padding-left: 13px;
        border-top: 1px solid #3c3c34;
        color: #3a3f46;
    }

    .menu button {
        display: block;
    }

    .bars {
        flex: none;
        display: flex;
        height: 26px;
    }

    .bar {
        display: flex;
        align-items: center;
        height: 25px;
        background: linear-gradient(#fff 60%, #dfe3ea);
        border-bottom: 1px solid #bcc2ca;
        border-radius: 0 4px 4px 0;
    }

    .grip {
        width: 3px;
        height: 18px;
        margin-right: 4px;
        background: repeating-linear-gradient(#b4bac2 0 2px, transparent 2px 4px);
    }

    .bar + .bar .grip {
        margin: 0 3px 0 4px;
    }

    .sep {
        width: 1px;
        height: 14px;
        margin: 0 4px;
        flex: none;
        background: #9096a0;
    }

    .tool {
        width: 22px;
        height: 22px;
        flex: none;
    }

    .on {
        background: linear-gradient(#ffe3a0, #ffd468);
        border: 1px solid #c69a3c;
        border-radius: 3px;
    }

    .fx {
        color: #000090;
        font-size: 12px;
        font-weight: 500;
    }

    .arrow {
        width: 11px;
        height: 20px;
        flex: none;
    }

    .arrow::after,
    .drop::after,
    .cap::after {
        content: "";
        border: solid transparent;
        border-width: 3px 3px 0;
        border-top-color: #000;
    }

    .combo {
        display: flex;
        height: 20px;
        border: 1px solid #a0a0a0;
        background: #fff;
    }

    .combo select {
        appearance: none;
        flex: 1;
        width: 0;
        border: 0;
        outline: 0;
        padding: 0 0 0 4px;
        background: #fff;
        color: #000;
        font: inherit;
    }

    .drop {
        width: 16px;
        display: flex;
        align-items: center;
        justify-content: center;
        border: 1px solid #707070;
        background: linear-gradient(#f4f4f4 50%, #d4d4d4);
        pointer-events: none;
    }

    .drop::after {
        border-width: 4px 4px 0;
    }

    .zoom {
        width: 66px;
    }

    .step {
        width: 60px;
    }

    .layer {
        width: 127px;
    }

    .load {
        width: 115px;
    }

    .cap {
        align-self: stretch;
        width: 10px;
        margin-left: 3px;
        display: flex;
        flex-direction: column;
        align-items: center;
        justify-content: flex-end;
        gap: 2px;
        padding-bottom: 4px;
        background: linear-gradient(#c4c8d0, #80868e);
        border-radius: 4px 4px 4px 0;
    }

    .cap::before {
        content: "";
        width: 6px;
        height: 1px;
        background: #000;
    }

    .bar + .bar .cap {
        margin-left: 7px;
    }

    .work {
        flex: 1;
        min-height: 0;
        display: flex;
    }

    .strip {
        width: 23px;
        flex: none;
        display: flex;
        flex-direction: column;
        overflow: hidden;
        background: linear-gradient(90deg, #f2f5f8, #fff 40%, #dfe3e8);
        border-right: 1px solid #a6acb6;
    }

    .strip-grip {
        width: 16px;
        height: 2px;
        margin: 3px 0 4px 1px;
        flex: none;
        background: repeating-linear-gradient(90deg, #b4bac2 0 2px, transparent 2px 4px);
    }

    .mode {
        flex: none;
        width: 18px;
        height: 17px;
        margin-left: 2px;
        overflow: hidden;
    }

    .current {
        background: #ffdc84;
        border: 1px solid #4c90e0;
    }

    .strip hr {
        width: 14px;
        height: 1px;
        margin: 3px 0 4px 2px;
        flex: none;
        border: 0;
        background: #9096a0;
    }

    .side-tool {
        flex: none;
        width: 20px;
        height: 22px;
        border-radius: 0 3px 3px 0;
    }

    main {
        flex: 1;
        min-width: 0;
        display: flex;
        flex-direction: column;
        border-top: 1px solid #9aa0a8;
    }

    .tabs {
        flex: none;
        display: flex;
        height: 24px;
        padding: 0 0 0 3px;
        border-bottom: 2px solid #d4e2f8;
    }

    .slope {
        width: 24px;
        height: 22px;
        flex: none;
    }

    .tab {
        height: 22px;
        display: flex;
        align-items: center;
        gap: 10px;
        padding-right: 8px;
        background: linear-gradient(#fff 45%, #c8dcf8);
        border: solid #8a94a4;
        border-width: 1px 1px 0 0;
        border-radius: 0 3px 0 0;
    }

    .tab b {
        font: bold 11px/16px "Noto Sans", sans-serif;
    }

    .close svg {
        width: 8px;
        height: 8px;
        display: block;
    }

    .middle {
        flex: 1;
        min-height: 0;
        display: flex;
        border: solid #9aa0a8;
        border-width: 1px 0 2px;
    }

    .panel {
        width: 224px;
        flex: none;
        display: flex;
        flex-direction: column;
        padding: 0 5px 2px 2px;
        border-left: 1px solid #b8ccf0;
    }

    .panel header {
        height: 18px;
        flex: none;
        display: flex;
        align-items: center;
        gap: 8px;
        padding: 0 4px 0 3px;
        background: #bfcddb;
        color: #50565e;
    }

    .panel header span {
        flex: 1;
    }

    .panel-bar {
        flex: none;
        display: flex;
        align-items: center;
        height: 26px;
        gap: 1px;
        padding-left: 1px;
        background: linear-gradient(#fff, #eceff3);
    }

    .tree-box {
        flex: 1;
        min-height: 0;
        display: grid;
        grid-template: 1fr 16px / 1fr 17px;
        margin: 0 0 1px 3px;
        padding: 3px 3px 3px 2px;
        border: 1px solid #828790;
        background: #fff;
    }

    .tree {
        margin: 0;
        padding: 0 0 0 4px;
        overflow: hidden;
        list-style: none;
        font-size: 12px;
    }

    .tree li {
        height: 20px;
        display: flex;
        align-items: center;
        white-space: nowrap;
    }

    .tree li span {
        line-height: 20px;
        padding-left: 7px;
    }

    .level1,
    .level2,
    .level3 {
        padding-left: 3px;
    }

    .branch {
        width: 20px;
        height: 20px;
        flex: none;
        display: flex;
        align-items: center;
        background:
            repeating-linear-gradient(90deg, #808080 0 1px, transparent 1px 2px) 5px 10px / 12px 1px no-repeat,
            repeating-linear-gradient(#808080 0 1px, transparent 1px 2px) 4px 0 / 1px 20px no-repeat;
    }

    .half {
        background-size: 12px 1px, 1px 10px;
    }

    .rail {
        width: 23px;
        height: 20px;
        flex: none;
    }

    .rail.inner {
        background: repeating-linear-gradient(#808080 0 1px, transparent 1px 2px) 0 0 / 1px 20px no-repeat;
    }

    .level3 .rail.inner {
        background-position: 4px 0;
    }

    .exp {
        width: 9px;
        height: 9px;
        border: 1px solid #989898;
        background: linear-gradient(#2a4a9a, #2a4a9a) center / 5px 1px no-repeat #fff;
    }

    .plus {
        background:
            linear-gradient(#2a4a9a, #2a4a9a) center / 5px 1px no-repeat,
            linear-gradient(#2a4a9a, #2a4a9a) center / 1px 5px no-repeat #fff;
    }

    .cross {
        width: 9px;
        height: 9px;
        margin-left: -4px;
        margin-right: 2px;
        flex: none;
    }

    .tree .sel {
        margin-left: 5px;
        padding-left: 2px;
        flex: 1;
        background: #eee;
    }

    .vscroll,
    .hscroll {
        display: flex;
        align-items: center;
        background: #f2f2f2;
    }

    .vscroll {
        flex-direction: column;
    }

    .tri {
        width: 17px;
        height: 17px;
        flex: none;
        display: flex;
        align-items: center;
        justify-content: center;
    }

    .tri::after {
        content: "";
        border: 3px solid transparent;
    }

    .up::after {
        border-top: 0;
        border-bottom: 4px solid #404040;
    }

    .down::after {
        border-bottom: 0;
        border-top: 4px solid #404040;
    }

    .left::after {
        border-left: 0;
        border-right: 4px solid #202020;
    }

    .right::after {
        border-right: 0;
        border-left: 4px solid #202020;
    }

    .thumb {
        display: flex;
        align-items: center;
        justify-content: center;
        border: 1px solid #989898;
        border-radius: 2px;
    }

    .vscroll .thumb {
        width: 15px;
        height: 140px;
        background: linear-gradient(90deg, #f6f6f6 50%, #d6d6d8);
    }

    .hscroll .thumb {
        width: 52px;
        height: 15px;
        background: linear-gradient(#f6f6f6 50%, #d6d6d8);
    }

    .thumb::after {
        content: "";
        width: 8px;
        height: 8px;
        background: repeating-linear-gradient(#666 0 1px, transparent 1px 3px);
    }

    .hscroll .thumb::after {
        background: repeating-linear-gradient(90deg, #666 0 1px, transparent 1px 3px);
    }

    .vscroll .down {
        margin-top: auto;
    }

    .hscroll .right {
        margin-left: auto;
    }

    .panel-tabs {
        height: 17px;
        flex: none;
        display: flex;
        padding-left: 1px;
        color: #40444c;
    }

    .panel-tabs button {
        padding: 0 3px;
        margin-right: 4px;
    }

    .panel-tabs .chosen {
        background: #fff;
        border: 1px solid #b0b4bc;
        border-top: 0;
        border-radius: 0 0 3px 3px;
    }

    .view {
        flex: 1;
        position: relative;
        overflow: hidden;
        border-left: 2px solid #787c80;
        border-top: 1px solid #787c80;
        background: linear-gradient(#6aa5e3, #fff);
    }

    .model {
        position: absolute;
        left: 401px;
        top: -6px;
        width: 370px;
        height: 330px;
    }

    .triad {
        position: absolute;
        left: 1px;
        bottom: 16px;
        width: 90px;
        height: 75px;
        font: 12px "Liberation Mono", monospace;
    }

    .dialog {
        position: absolute;
        left: 89px;
        top: 51px;
        width: 297px;
        padding: 0 6px 6px;
        border: 1px solid #3c4858;
        border-radius: 6px;
        background: linear-gradient(105deg, #aec8e4, #8cb0d6 40%, #9cbcdc 60%, #a8c2e0);
        box-shadow: inset 0 0 0 1px #dce8f4, 0 1px 5px #28405c;
    }

    .dialog h2 {
        margin: 0;
        padding: 6px 1px 5px;
        font: 12px/16px Roboto, sans-serif;
    }

    .dialog-body {
        padding: 11px 11px 12px;
        border: 1px solid #50606e;
        background: #f0f0f0;
        font: 11px/14px "Liberation Sans", sans-serif;
    }

    .dialog label {
        display: block;
    }

    .dialog input {
        display: block;
        width: 100%;
        height: 22px;
        margin: 4px 0 12px;
        padding: 0 2px 2px;
        border: 1px solid #dcdfe6;
        border-top-color: #abadb3;
        background: #f0f0f0;
        font: inherit;
    }

    .dialog-buttons {
        display: grid;
        grid-template-columns: 121px 1fr;
        gap: 12px;
        padding: 0 1px;
    }

    .dialog-buttons button {
        height: 24px;
        border: 1px solid #707070;
        border-radius: 3px;
        background: linear-gradient(#f4f4f4 50%, #dcdcdc 50%, #cfcfcf);
        box-shadow: inset 0 0 0 1px #fcfcfc;
    }

    footer {
        flex: none;
        display: flex;
        height: 71px;
        padding-top: 8px;
    }

    .side-grip {
        width: 3px;
        height: 58px;
        margin: 0 2px 0 1px;
        background: repeating-linear-gradient(#b4bac2 0 2px, transparent 2px 4px);
    }

    .commands {
        width: 46px;
        height: 59px;
        flex: none;
        display: grid;
        grid-template: 22px 22px / 22px 22px;
        padding: 2px 0;
        background: linear-gradient(90deg, #fff, #e8ecf0);
    }

    .props {
        flex: 1;
        min-width: 0;
    }

    .params {
        display: flex;
        align-items: center;
        height: 36px;
        padding-left: 17px;
        border: solid #909498;
        border-width: 1px 0 2px 2px;
        border-bottom-color: #686868;
        background: linear-gradient(#fff 40%, #e4e8ec);
        color: #70747a;
        font: 11px/16px "Liberation Sans", sans-serif;
        white-space: nowrap;
    }

    .pair {
        display: flex;
        gap: 2px;
        margin: 0 4px 0 6px;
    }

    .param {
        width: 20px;
        height: 20px;
        border: 1px solid #a0a0a0;
        background: #f0f0f0;
    }

    .lit {
        background: #ffe078;
    }

    .list {
        flex: none;
        width: 145px;
        height: 24px;
        justify-content: flex-start;
        padding-left: 6px;
        margin-left: 11px;
        border: 1px solid #a0a0a0;
        background: #f0f0f0;
        color: #9a9ea2;
    }

    .list span {
        margin-left: 9px;
    }

    .props-tab {
        height: 20px;
        margin-left: 3px;
        padding: 1px 5px 0 2px;
        gap: 2px;
        border: 1px solid #b0b4bc;
        border-top: 0;
        border-radius: 0 0 3px 3px;
        background: #fff;
        color: #40444c;
    }
</style>
